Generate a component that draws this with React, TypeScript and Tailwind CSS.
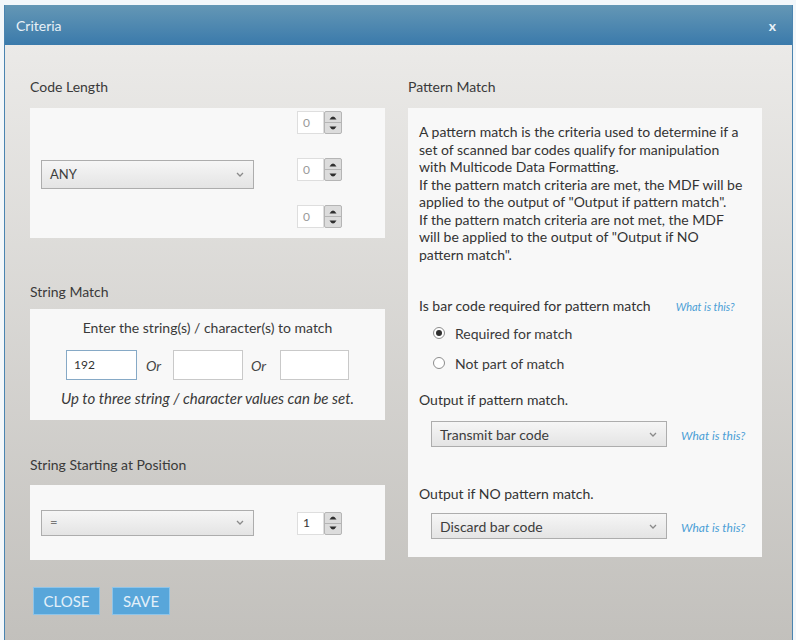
import React from "react";

function Chevron() {
  return (
    <svg width="8" height="5" viewBox="0 0 8 5" className="shrink-0">
      <path d="M1 1 L4 4 L7 1" fill="none" stroke="#8a8a8a" strokeWidth="1.3" />
    </svg>
  );
}

function Select({
  value,
  className,
  muted,
  size = "text-[14px]",
}: {
  value: string;
  className: string;
  muted?: boolean;
  size?: string;
}) {
  return (
    <div
      className={
        "flex items-center justify-between border border-[#adadad] bg-gradient-to-b from-[#f6f6f6] to-[#e4e4e4] pl-[8px] pr-[9px] " +
        className
      }
    >
      <span className={size + (muted ? " text-[#777]" : " text-[#3d3d3d]")}>{value}</span>
      <Chevron />
    </div>
  );
}

function Spinner({ value, dark }: { value: string; dark?: boolean }) {
  return (
    <div className="flex h-[23px] w-[45px]">
      <div
        className={
          "flex h-full w-[27px] items-center border border-[#dedede] bg-white pl-[5px] text-[12px] " +
          (dark ? "text-[#333]" : "text-[#9a9a9a]")
        }
      >
        {value}
      </div>
      <div className="flex h-full w-[18px] flex-col rounded-[2px] border border-[#b5b5b5] bg-[#dcdcdc]">
        <div className="flex flex-1 items-center justify-center border-b border-[#b5b5b5]">
          <svg width="8" height="5" viewBox="0 0 8 5">
            <path d="M0.5 4.5 Q4 -1.5 7.5 4.5 Z" fill="#2e2e2e" />
          </svg>
        </div>
        <div className="flex flex-1 items-center justify-center">
          <svg width="8" height="5" viewBox="0 0 8 5">
            <path d="M0.5 0.5 Q4 6.5 7.5 0.5 Z" fill="#2e2e2e" />
          </svg>
        </div>
      </div>
    </div>
  );
}

function Radio({ checked, label }: { checked?: boolean; label: string }) {
  return (
    <div className="flex h-[20px] items-center">
      <div className="ml-[14px] flex h-[12px] w-[12px] items-center justify-center rounded-full border border-[#8d8d8d] bg-white">
        {checked && <div className="h-[6px] w-[6px] rounded-full bg-[#2f2f2f]" />}
      </div>
      <span className="ml-[10px] text-[14px] text-[#3a3a3a]">{label}</span>
    </div>
  );
}

function Help({ size }: { size: string }) {
  return <span className={"italic text-[#4c9fd6] " + size}>What is this?</span>;
}

export default function App() {
  return (
    <div className="h-[640px] w-[796px] overflow-hidden bg-[#f3f7fa] pl-[4px] pt-[5px] font-['Lato',sans-serif]">
      <div className="flex h-[640px] w-[789px] flex-col border-x border-[#4a84b0]">
        {/* title bar */}
        <div className="flex h-[40px] shrink-0 items-center justify-between bg-gradient-to-b from-[#6497b5] to-[#3a7aab] pl-[11px] pr-[16px]">
          <span className="text-[14px] text-[#e8f1f7]">Criteria</span>
          <span className="text-[14px] font-bold text-[#e8f1f7]">x</span>
        </div>

        {/* body */}
        <div className="flex flex-1 gap-[23px] bg-gradient-to-b from-[#ebeae8] to-[#c2c0bc] pl-[25px] pt-[32px]">
          {/* left column */}
          <div className="flex w-[355px] flex-col">
            <div className="mb-[11px] h-[20px] text-[14px] leading-[20px] text-[#3a3a3a]">Code Length</div>
            <div className="flex h-[130px] items-center bg-[#f8f8f8] pl-[11px] pr-[43px]">
              <Select value="ANY" size="text-[13px]" className="mt-[3px] h-[29px] w-[213px]" />
              <div className="ml-auto flex h-full flex-col justify-between pb-[10px] pt-[3px]">
                <Spinner value="0" />
                <Spinner value="0" />
                <Spinner value="0" />
              </div>
            </div>

            <div className="mb-[7px] mt-[44px] h-[20px] text-[14px] leading-[20px] text-[#3a3a3a]">String Match</div>
            <div className="flex h-[111px] flex-col items-center bg-[#f8f8f8]">
              <div className="mt-[9px] h-[20px] text-[14px] leading-[20px] text-[#3a3a3a]">
                Enter the string(s) / character(s) to match
              </div>
              <div className="mt-[12px] flex h-[30px] items-center">
                <div className="flex h-full w-[71px] items-center border border-[#86a9c6] bg-white pl-[7px] text-[12px] text-[#333]">
                  192
                </div>
                <span className="w-[36px] pl-[9px] text-[14px] italic text-[#444]">Or</span>
                <div className="h-full w-[70px] border border-[#c9c9c9] bg-white" />
                <span className="w-[37px] pl-[8px] text-[14px] italic text-[#444]">Or</span>
                <div className="h-full w-[69px] border border-[#c9c9c9] bg-white" />
              </div>
              <div className="mt-[8px] h-[20px] whitespace-nowrap text-[15px] italic leading-[20px] text-[#3a3a3a]">
                Up to three string / character values can be set.
              </div>
            </div>

            <div className="mb-[10px] mt-[35px] h-[20px] text-[14px] leading-[20px] text-[#3a3a3a]">
              String Starting at Position
            </div>
            <div className="flex h-[75px] items-center bg-[#f8f8f8] pl-[11px] pr-[43px]">
              <Select value="=" muted size="text-[13px]" className="h-[26px] w-[213px]" />
              <div className="ml-auto mt-[1px]">
                <Spinner value="1" dark />
              </div>
            </div>

            <div className="mt-[27px] flex gap-[12px] pl-[3px]">
              <button className="h-[28px] w-[67px] border border-[#8fc4e8] bg-[#58a6da] text-[15px] text-[#e3f0f9]">
                CLOSE
              </button>
              <button className="h-[28px] w-[58px] border border-[#8fc4e8] bg-[#58a6da] text-[15px] text-[#e3f0f9]">
                SAVE
              </button>
            </div>
          </div>

          {/* right column */}
          <div className="flex w-[354px] flex-col">
            <div className="mb-[11px] h-[20px] text-[14px] leading-[20px] text-[#3a3a3a]">Pattern Match</div>
            <div className="flex h-[449px] flex-col bg-[#f8f8f8] pl-[11px]">
              <p className="mt-[15px] whitespace-nowrap text-[14px] leading-[17.5px] text-[#333]">
                A pattern match is the criteria used to determine if a
                <br />
                set of scanned bar codes qualify for manipulation
                <br />
                with Multicode Data Formatting.
                <br />
                If the pattern match criteria are met, the MDF will be
                <br />
                applied to the output of "Output if pattern match".
                <br />
                If the pattern match criteria are not met, the MDF
                <br />
                will be applied to the output of "Output if NO
                <br />
                pattern match".
              </p>

              <div className="mt-[32px] flex h-[20px] items-center">
                <span className="text-[14px] text-[#333]">Is bar code required for pattern match</span>
                <span className="ml-[25px]">
                  <Help size="text-[11px]" />
                </span>
              </div>
              <div className="mt-[8px]">
                <Radio checked label="Required for match" />
              </div>
              <div className="mt-[10px]">
                <Radio label="Not part of match" />
              </div>

              <div className="mt-[17px] h-[20px] text-[14px] leading-[20px] text-[#333]">Output if pattern match.</div>
              <div className="mt-[11px] flex items-center">
                <Select value="Transmit bar code" className="ml-[12px] h-[26px] w-[236px]" />
                <span className="ml-[14px]">
                  <Help size="text-[12px]" />
                </span>
              </div>

              <div className="mt-[37px] h-[20px] text-[14px] leading-[20px] text-[#333]">Output if NO pattern match.</div>
              <div className="mt-[9px] flex items-center">
                <Select value="Discard bar code" className="ml-[12px] h-[26px] w-[236px]" />
                <span className="ml-[14px]">
                  <Help size="text-[12px]" />
                </span>
              </div>
            </div>
          </div>
        </div>
      </div>
    </div>
  );
}
